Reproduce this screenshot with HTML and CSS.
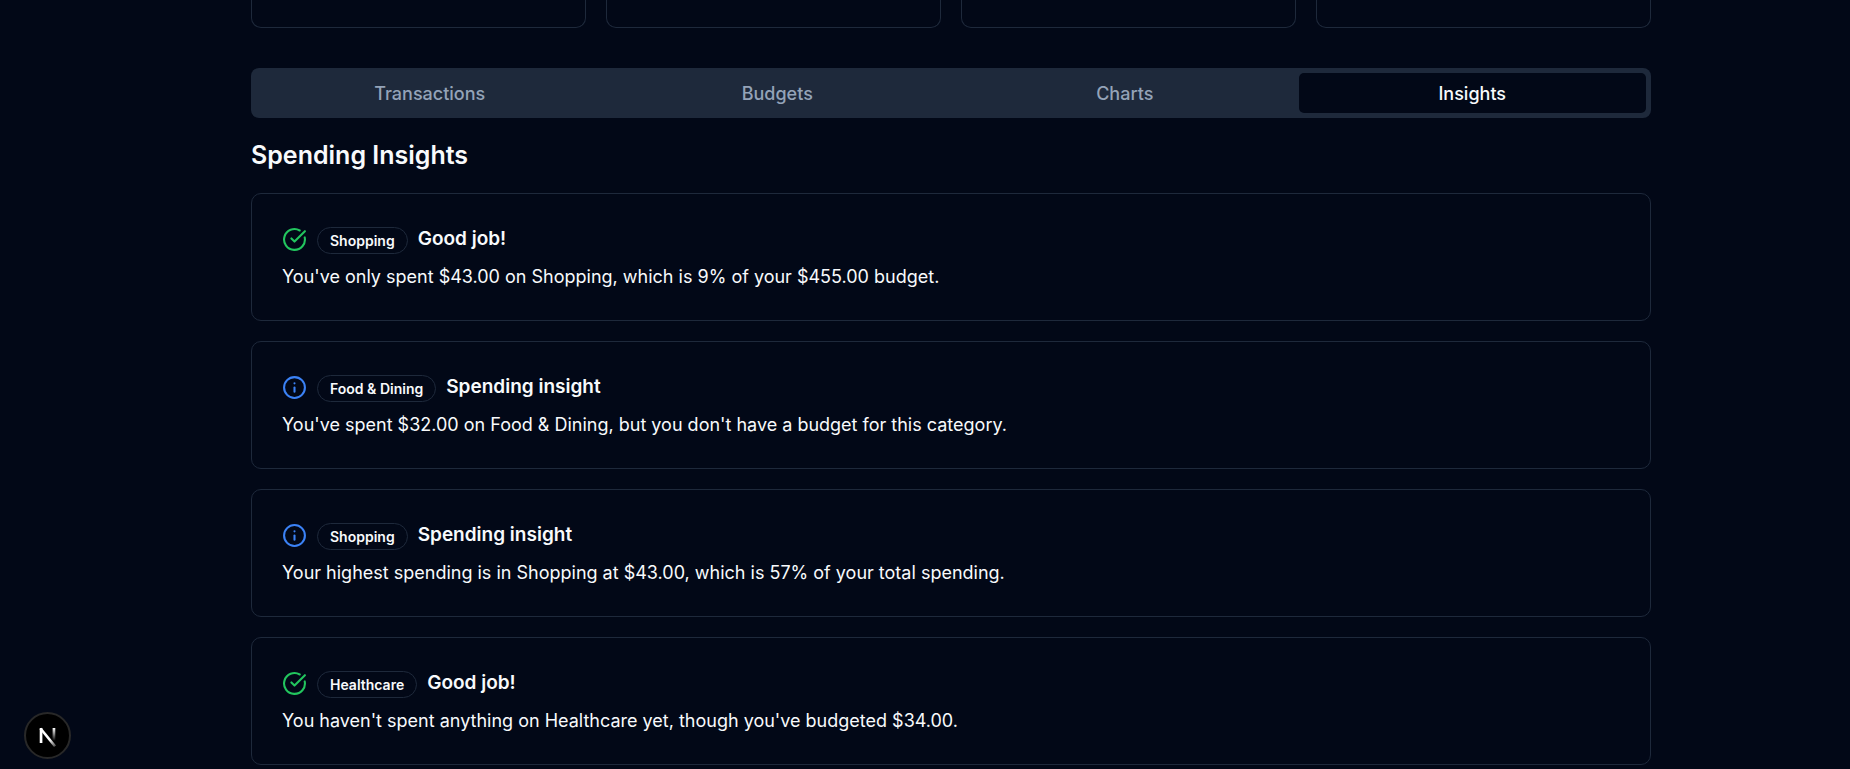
FILE: index.html
```html
<!DOCTYPE html>
<html lang="en">
<head>
<meta charset="utf-8">
<meta name="viewport" content="width=device-width, initial-scale=1">
<title>Spending Insights</title>
<link rel="stylesheet" href="styles.css">
</head>
<body>
<svg class="sprite" aria-hidden="true">
  <symbol id="check" viewBox="0 0 24 24"><path d="M21.801 10A10 10 0 1 1 17 3.335"/><path d="m9 11 3 3L22 4"/></symbol>
  <symbol id="info" viewBox="0 0 24 24"><circle cx="12" cy="12" r="10"/><path d="M12 16v-4"/><path d="M12 8h.01"/></symbol>
</svg>
<main class="container">
  <div class="stats">
    <div class="stat"></div>
    <div class="stat"></div>
    <div class="stat"></div>
    <div class="stat"></div>
  </div>
  <div class="tabs" role="tablist">
    <button class="tab" role="tab" aria-selected="false">Transactions</button>
    <button class="tab" role="tab" aria-selected="false">Budgets</button>
    <button class="tab" role="tab" aria-selected="false">Charts</button>
    <button class="tab tab-active" role="tab" aria-selected="true">Insights</button>
  </div>
  <section class="insights" role="tabpanel">
    <h2 class="heading">Spending Insights</h2>
    <article class="card">
      <h3 class="card-title">
        <svg class="icon icon-good"><use href="#check"/></svg>
        <span class="badge">Shopping</span>
        <span>Good job!</span>
      </h3>
      <p class="card-text">You've only spent $43.00 on Shopping, which is 9% of your $455.00 budget.</p>
    </article>
    <article class="card">
      <h3 class="card-title">
        <svg class="icon icon-info"><use href="#info"/></svg>
        <span class="badge">Food &amp; Dining</span>
        <span>Spending insight</span>
      </h3>
      <p class="card-text">You've spent $32.00 on Food &amp; Dining, but you don't have a budget for this category.</p>
    </article>
    <article class="card">
      <h3 class="card-title">
        <svg class="icon icon-info"><use href="#info"/></svg>
        <span class="badge">Shopping</span>
        <span>Spending insight</span>
      </h3>
      <p class="card-text">Your highest spending is in Shopping at $43.00, which is 57% of your total spending.</p>
    </article>
    <article class="card">
      <h3 class="card-title">
        <svg class="icon icon-good"><use href="#check"/></svg>
        <span class="badge">Healthcare</span>
        <span>Good job!</span>
      </h3>
      <p class="card-text">You haven't spent anything on Healthcare yet, though you've budgeted $34.00.</p>
    </article>
  </section>
</main>
<button class="dev-button" aria-label="Open Next.js Dev Tools">
  <svg class="dev-logo" viewBox="0 0 40 40" fill="none">
    <defs>
      <linearGradient id="diagonal" gradientUnits="userSpaceOnUse" x1="22" y1="24" x2="29" y2="33"><stop stop-color="#fff"/><stop offset="1" stop-color="#fff" stop-opacity="0"/></linearGradient>
      <linearGradient id="stem" gradientUnits="userSpaceOnUse" x1="26" y1="13" x2="26" y2="25"><stop stop-color="#fff"/><stop offset="1" stop-color="#fff" stop-opacity="0"/></linearGradient>
    </defs>
    <path d="M14 27V13" stroke="#fff" stroke-width="2.5"/>
    <path d="M13.500 13.500L27 30" stroke="url(#diagonal)" stroke-width="2.500"/>
    <path d="M26 13v13" stroke="url(#stem)" stroke-width="2.500"/>
  </svg>
</button>
</body>
</html>
```
FILE: styles.css
```css
* {
  box-sizing: border-box;
}

body {
  margin: 0;
  padding-left: 52px;
  background: #020817;
  color: #f8fafc;
  font-family: Inter, "Liberation Sans", sans-serif;
}

h2,
h3,
p {
  margin: 0;
}

.sprite {
  display: none;
}

.container {
  max-width: 1400px;
  margin: 0 auto;
}

.stats {
  display: grid;
  grid-template-columns: repeat(4, 1fr);
  gap: 20px;
}

.stat {
  padding-bottom: 27px;
  border: 1px solid #1e293b;
  border-top: 0;
  border-radius: 0 0 10px 10px;
}

.tabs {
  display: grid;
  grid-template-columns: repeat(4, 1fr);
  margin-top: 40px;
  padding: 5px;
  border-radius: 8px;
  background: #1e293b;
}

.tab {
  padding: 9px 15px 7px;
  border: 0;
  border-radius: 5px;
  background: transparent;
  color: #94a3b8;
  font: 500 18px/24px Inter, "Liberation Sans", sans-serif;
  cursor: pointer;
}

.tab-active {
  background: #020817;
  color: #f8fafc;
}

.insights {
  display: flex;
  flex-direction: column;
  gap: 20px;
  margin-top: 20px;
}

.heading {
  font-size: 25px;
  font-weight: 600;
  line-height: 35px;
}

.card {
  padding: 30px;
  border: 1px solid #1e293b;
  border-radius: 10px;
}

.card-title {
  display: flex;
  gap: 10px;
  margin-bottom: 10px;
  font-size: 19px;
  font-weight: 600;
  line-height: 30px;
}

.icon {
  flex: none;
  width: 25px;
  height: 25px;
  margin-top: 3px;
  fill: none;
  stroke: currentColor;
  stroke-width: 2;
  stroke-linecap: round;
  stroke-linejoin: round;
}

.icon-good {
  color: #22c55e;
}

.icon-info {
  color: #3b82f6;
}

.badge {
  align-self: flex-end;
  padding: 2px 12px;
  border: 1px solid #1e293b;
  border-radius: 999px;
  font-size: 14px;
  line-height: 21px;
}

.card-text {
  font-size: 18px;
  line-height: 26px;
}

.dev-button {
  position: fixed;
  bottom: 10px;
  left: 24px;
  width: 47px;
  height: 47px;
  padding: 0;
  border: 2px solid #282828;
  border-radius: 50%;
  background: #000;
  cursor: pointer;
}

.dev-logo {
  display: block;
  width: 43px;
  height: 43px;
}
```
